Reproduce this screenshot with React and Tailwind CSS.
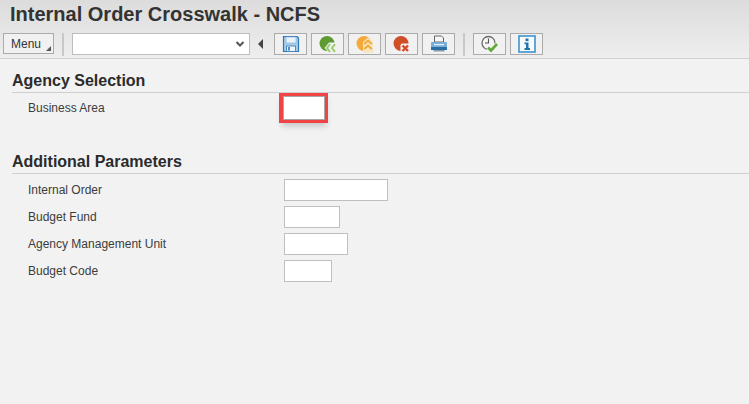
import React from "react";

const IconBtn = ({ children }) => (
  <div className="flex h-[22px] w-[33px] shrink-0 items-center justify-center border border-[#ababab] bg-[#f1f1f1]">
    <svg width="18" height="18" viewBox="0 0 18 18">{children}</svg>
  </div>
);

const Sep = () => <div className="h-[23px] w-[2px] shrink-0 bg-[#c8c8c8]" />;

const Section = ({ title, children, className = "" }) => (
  <section className={className}>
    <h2 className="ml-3 h-[23px] border-b border-[#cfcfcf] text-[16px] font-bold leading-[22px] text-[#2b2b2b]">{title}</h2>
    {children}
  </section>
);

const Row = ({ label, w }) => (
  <div className="flex h-[27px] items-center">
    <span className="w-[284px] pl-7 text-[12px] leading-[14px] text-[#3c3c3c]">{label}</span>
    <div className={`h-[22px] border border-[#bfbfbf] bg-white ${w}`} />
  </div>
);

export default function App() {
  return (
    <div className="flex h-[404px] w-[749px] flex-col overflow-hidden bg-[#f2f2f2] font-['Liberation_Sans',Arial,sans-serif]">
      <header className="h-[59px] shrink-0 border-b border-[#d0d0d0] bg-gradient-to-b from-[#dcdcdc] to-[#eeeeee]">
        <h1 className="h-[30px] pl-[10px] text-[20px] font-bold leading-[29px] text-[#333333]">Internal Order Crosswalk - NCFS</h1>
        <div className="flex h-[28px] items-start pt-[3px]">
          <div className="relative ml-[3px] flex h-[21px] w-[51px] items-center border border-[#ababab] bg-[#f1f1f1] pl-[7px] text-[12px] text-[#333333]">
            Menu
            <span className="absolute bottom-[2px] right-[2px] h-0 w-0 border-b-[5px] border-l-[5px] border-b-[#555555] border-l-transparent" />
          </div>
          <div className="ml-2"><Sep /></div>
          <div className="ml-2 flex h-[22px] w-[178px] items-center justify-end border border-[#bdbdbd] bg-white pr-[4px]">
            <svg width="10" height="8" viewBox="0 0 10 8"><path d="M1.5 2 L5 5.5 L8.5 2" fill="none" stroke="#555" strokeWidth="2" /></svg>
          </div>
          <div className="ml-2 mt-[6px] h-0 w-0 border-y-[5px] border-r-[5px] border-y-transparent border-r-[#444444]" />
          <div className="ml-[11px] flex gap-[4px]">
            <IconBtn>
              <path d="M1.5 1.5 H15 L16.5 3 V16.5 H1.5 Z" fill="#a9cde8" stroke="#2f78b5" strokeWidth="1.2" />
              <rect x="4" y="2" width="10" height="6" fill="#e8f2fa" stroke="#7fb0d6" strokeWidth="0.6" />
              <rect x="4.5" y="11" width="9" height="5.5" fill="#eef4f9" stroke="#2f78b5" strokeWidth="0.8" />
              <rect x="6" y="12" width="2" height="3.5" fill="#4f8fc4" />
            </IconBtn>
            <IconBtn>
              <circle cx="8" cy="8.5" r="7.5" fill="#5f9b33" />
              <path d="M5.5 13 L10 7.5 H18 V17.5 H10 Z" fill="#f1f1f1" />
              <path d="M11 9.2 L8 13 L11 16.8 M16 9.2 L13 13 L16 16.8" fill="none" stroke="#9ccb6c" strokeWidth="2" />
            </IconBtn>
            <IconBtn>
              <circle cx="8" cy="8.5" r="7.5" fill="#f3aa3a" />
              <path d="M7 7 L12 2.5 L17 7 V17.5 H7 Z" fill="#f8e4bf" />
              <path d="M8.2 9 L12 5.5 L15.8 9 M8.2 14 L12 10.5 L15.8 14" fill="none" stroke="#f3aa3a" strokeWidth="2" />
            </IconBtn>
            <IconBtn>
              <circle cx="8" cy="8.5" r="7.5" fill="#cf4f28" />
              <rect x="7.5" y="8.5" width="10" height="9" rx="2" fill="#f1f1f1" />
              <path d="M9.5 10.5 L15 16 M15 10.5 L9.5 16" stroke="#d9482b" strokeWidth="2.4" />
            </IconBtn>
            <IconBtn>
              <path d="M4.5 1 H11.5 L13.5 3 V7 H4.5 Z" fill="#f7f7f7" stroke="#555" strokeWidth="0.9" />
              <rect x="1" y="7" width="16" height="6" rx="1" fill="#79aed6" />
              <rect x="1" y="12" width="16" height="3" fill="#2a6ea6" />
              <rect x="3.5" y="15" width="11" height="1.5" fill="#8a9aa6" />
              <rect x="4" y="9" width="10" height="1.2" fill="#e6f0f8" />
            </IconBtn>
            <div className="ml-[4px]"><Sep /></div>
            <div className="ml-[4px]">
              <IconBtn>
                <circle cx="7.5" cy="8" r="6.5" fill="#f4f4f4" stroke="#6a6a6a" strokeWidth="1.3" />
                <path d="M7.5 3.5 V8 H4" fill="none" stroke="#555" strokeWidth="1.1" />
                <path d="M7 12.5 L10 15.5 L16 9" fill="none" stroke="#f1f1f1" strokeWidth="4.4" />
                <path d="M7 12.5 L10 15.5 L16 9" fill="none" stroke="#62a93c" strokeWidth="2.6" />
              </IconBtn>
            </div>
            <IconBtn>
              <rect x="1" y="1" width="16" height="16" fill="#f7fbfe" stroke="#3c93cc" strokeWidth="1.6" />
              <rect x="7.5" y="3.5" width="3" height="2.6" fill="#1f76ad" />
              <path d="M6.5 7.5 H10.5 V13 H12 V15 H6.5 V13 H8 V9.2 H6.5 Z" fill="#1f76ad" />
            </IconBtn>
          </div>
        </div>
      </header>

      <main className="flex flex-col pt-[11px]">
        <Section title="Agency Selection">
          <div className="flex h-[27px] items-center pt-[3px]">
            <span className="w-[284px] pl-7 text-[12px] leading-[14px] text-[#3c3c3c]">Business Area</span>
            <div className="h-[22px] w-[40px] bg-white shadow-[0_0_0_1px_#a8a8a8,0_0_0_4px_#ee4444,-1px_0_0_4px_#ee4444,0_5px_6px_2px_rgba(90,90,90,0.3)]" />
          </div>
        </Section>
        <Section title="Additional Parameters" className="mt-[31px]">
          <div className="pt-[2px]">
            <Row label="Internal Order" w="w-[104px]" />
            <Row label="Budget Fund" w="w-[56px]" />
            <Row label="Agency Management Unit" w="w-[64px]" />
            <Row label="Budget Code" w="w-[48px]" />
          </div>
        </Section>
      </main>
    </div>
  );
}
